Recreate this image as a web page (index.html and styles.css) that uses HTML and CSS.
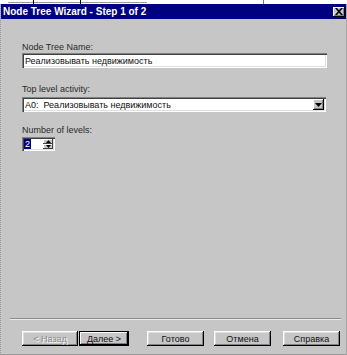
FILE: index.html
```html
<!DOCTYPE html>
<html>
<head>
<meta charset="utf-8">
<link rel="stylesheet" href="styles.css">
</head>
<body>
<div class="strip">
  <div class="hline"></div>
  <div class="tick tick1"></div>
  <div class="tick tick2"></div>
  <div class="vline"></div>
</div>
<div class="window">
  <div class="titlebar">
    <span class="title">Node Tree Wizard - Step 1 of 2</span>
    <span class="close"><svg width="8" height="7" viewBox="0 0 8 7"><path d="M0 0h2l2 2.2L6 0h2L5 3.5 8 7H6L4 4.8 2 7H0l3-3.5z" fill="#000"/></svg></span>
  </div>
  <div class="content">
    <div class="label l1">Node Tree Name:</div>
    <div class="field text">Реализовывать недвижимость</div>
    <div class="label l2">Top level activity:</div>
    <div class="field combo">
      <span class="combo-text">A0:&nbsp; Реализовывать недвижимость</span>
      <span class="drop"><svg width="7" height="4" viewBox="0 0 7 4"><path d="M0 0h7L3.5 4z" fill="#000"/></svg></span>
    </div>
    <div class="label l3">Number of levels:</div>
    <div class="field spin">
      <span class="spin-val"><span class="sel">2</span></span>
      <span class="spin-btns">
        <span class="sb"><svg width="5" height="3" viewBox="0 0 5 3"><path d="M0 3h5L2.5 0z" fill="#000"/></svg></span>
        <span class="sb"><svg width="5" height="3" viewBox="0 0 5 3"><path d="M0 0h5L2.5 3z" fill="#000"/></svg></span>
      </span>
    </div>
  </div>
  <div class="sep"></div>
  <div class="buttons">
    <span class="btn disabled b1">&lt; Назад</span>
    <span class="btn default b2">Далее &gt;</span>
    <span class="btn b3">Готово</span>
    <span class="btn b4">Отмена</span>
    <span class="btn b5">Справка</span>
  </div>
</div>
</body>
</html>
```
FILE: styles.css
```css
html, body {
  margin: 0;
  padding: 0;
  background: #ffffff;
}
body {
  width: 347px;
  height: 355px;
  overflow: hidden;
  font-family: "Liberation Sans", Arial, sans-serif;
}
.strip {
  height: 4px;
  display: flex;
  align-items: flex-start;
  background: #ffffff;
}
.hline {
  margin-top: 2px;
  margin-left: 8px;
  width: 139px;
  height: 1px;
  background: #9a9a9a;
}
.tick {
  width: 1px;
  height: 4px;
  background: #000;
}
.tick1 { margin-left: -114px; }
.tick2 { margin-left: 46px; }
.vline {
  margin-left: 182px;
  width: 1px;
  height: 4px;
  background: #777;
}
.window {
  height: 351px;
  background: #c6c6c6;
  border-left: 1px dotted #9a9a9a;
  border-right: 1px solid #a8a8a8;
  border-bottom: 1px solid #9a9a9a;
  box-sizing: border-box;
  display: flex;
  flex-direction: column;
}
.titlebar {
  height: 15px;
  background: #000080;
  display: flex;
  align-items: center;
  justify-content: space-between;
  padding-left: 2px;
  padding-right: 1px;
}
.title {
  color: #ffffff;
  font-weight: bold;
  font-size: 10px;
}
.close {
  width: 12px;
  height: 10px;
  background: #c6c6c6;
  box-shadow: inset -1px -1px #000, inset 1px 1px #fff, inset -2px -2px #808080;
  display: flex;
  align-items: center;
  justify-content: center;
}
.content {
  padding-left: 21px;
  padding-top: 22px;
  flex: 1;
  display: flex;
  flex-direction: column;
  align-items: flex-start;
}
.label {
  font-size: 9px;
  line-height: 12px;
  color: #2a2a2a;
}
.l1 { margin-bottom: 0px; }
.l2 { margin-top: 15px; margin-bottom: 2px; }
.l3 { margin-top: 12px; margin-bottom: 1px; }
.field {
  height: 15px;
  box-sizing: border-box;
  background: #ffffff;
  box-shadow: inset 1px 1px #808080, inset 2px 2px #404040, inset -1px -1px #ffffff, inset -2px -2px #dfdfdf;
  font-size: 9px;
  color: #111;
  display: flex;
  align-items: center;
}
.text {
  width: 305px;
  padding-left: 3px;
}
.combo {
  width: 304px;
  padding-left: 3px;
  padding-right: 2px;
  justify-content: space-between;
}
.drop {
  width: 11px;
  height: 11px;
  background: #c6c6c6;
  box-shadow: inset -1px -1px #000, inset 1px 1px #fff, inset -2px -2px #808080;
  display: flex;
  align-items: center;
  justify-content: center;
}
.spin {
  width: 33px;
  height: 14px;
  padding-left: 2px;
  padding-right: 2px;
  justify-content: space-between;
}
.sel {
  background: #000080;
  color: #fff;
  padding: 0 1px;
  line-height: 10px;
}
.spin-btns {
  display: flex;
  flex-direction: column;
  height: 10px;
}
.sb {
  width: 10px;
  height: 5px;
  background: #c6c6c6;
  box-shadow: inset -1px -1px #404040, inset 1px 1px #fff;
  display: flex;
  align-items: center;
  justify-content: center;
}
.sep {
  margin: 0 5px 0 9px;
  height: 1px;
  background: #8a8a8a;
  border-bottom: 1px solid #ececec;
}
.buttons {
  display: flex;
  padding-left: 21px;
  margin-top: 11px;
  height: 23px;
  align-items: flex-start;
}
.btn {
  height: 15px;
  box-sizing: border-box;
  font-size: 9px;
  display: flex;
  align-items: center;
  justify-content: center;
  background: #c6c6c6;
  color: #111;
  box-shadow: inset -1px -1px #000, inset 1px 1px #fff, inset -2px -2px #808080, inset 2px 2px #dfdfdf;
}
.b1 { width: 56px; }
.b2 { width: 50px; margin-left: 1px; }
.b3 { width: 57px; margin-left: 18px; }
.b4 { width: 57px; margin-left: 10px; }
.b5 { width: 57px; margin-left: 12px; }
.disabled {
  color: #8a8a8a;
  text-shadow: 1px 1px #fff;
}
.default {
  box-shadow: inset 0 0 0 1px #000, inset -2px -2px #000, inset 2px 2px #fff, inset -3px -3px #808080;
}
```
